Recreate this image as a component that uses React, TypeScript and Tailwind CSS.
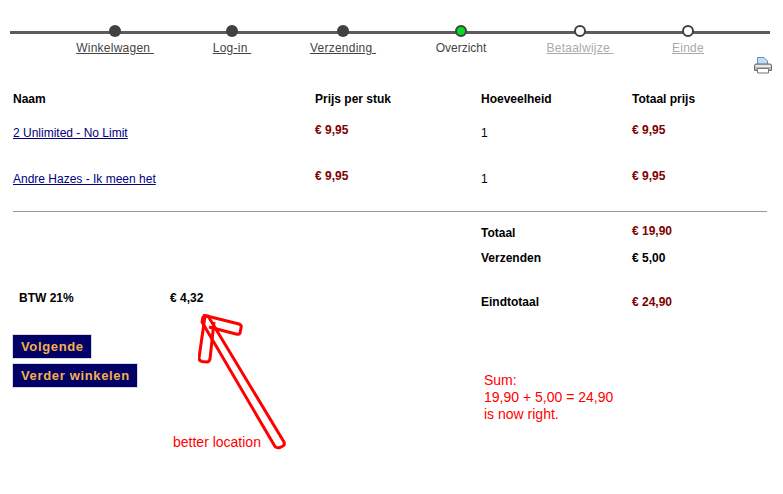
const steps = [
  { label: "Winkelwagen\u00a0", width: "w-[118px]", dot: "dark", text: "link" },
  { label: "Log-in\u00a0", width: "w-[116px]", dot: "dark", text: "link" },
  { label: "Verzending\u00a0", width: "w-[106px]", dot: "dark", text: "link" },
  { label: "Overzicht", width: "w-[130px]", dot: "green", text: "current" },
  { label: "Betaalwijze\u00a0", width: "w-[108px]", dot: "open", text: "off" },
  { label: "Einde", width: "w-[108px]", dot: "open", text: "off" },
];

const Dot = ({ kind }: { kind: string }) => {
  if (kind === "dark") return <div className="size-3 rounded-full bg-[#414141]" />;
  if (kind === "green") return <div className="size-3 rounded-full border-2 border-[#414141] bg-[#00e020]" />;
  return <div className="size-3 rounded-full border-2 border-[#414141] bg-white" />;
};

const Printer = () => (
  <svg width="18" height="17" viewBox="0 0 18 17">
    <path d="M3.500 .5h6.500l3.500 3.500v5h-10z" fill="#c4daf5" stroke="#5f8fca" />
    <path d="M.5 8.500q0 -1.500 1.500 -1.500h14q1.500 0 1.500 1.500v5h-17z" fill="#b4b7ba" stroke="#66696d" />
    <path d="M1.500 8h15v2h-15z" fill="#e6e8ea" />
    <path d="M3.500 11.500h11v4.500h-11z" fill="#fff" stroke="#74777a" />
  </svg>
);

const Arrow = () => (
  <svg width="100" height="140" viewBox="0 0 100 140" fill="none" stroke="#ff0000" strokeWidth="3" strokeLinejoin="round">
    <path d="M5 3l5 -1L86 128q1 3 -1 4l-3 1.500q-3 1 -5 -1L4 8z" />
    <path d="M7 2l-6 42q0 3 3 3.500l5 .5q2 0 3 -3l4 -37" />
    <path d="M5 1l36 9q3 1 2 4l-1 5q-1 2 -4 1l-27 -7" />
  </svg>
);

const Money = ({ children, red = true }: { children: string; red?: boolean }) => (
  <span className={red ? "font-bold text-[#800000]" : "font-bold text-black"}>{children}</span>
);

const Btn = ({ children }: { children: string }) => (
  <button className="block h-[25px] border border-[#d8d8e0] bg-[#000066] pl-[8px] pr-[7px] text-[13px] font-bold tracking-[0.65px] text-[#f5b04c]">
    {children}
  </button>
);

const App = () => {
  return (
    <div className="relative h-[494px] w-[783px] overflow-hidden bg-white font-['Liberation_Sans',Arial,sans-serif] text-xs text-black">
      {/* stepper */}
      <div className="relative ml-[10px] w-[760px] pt-[25px]">
        <div className="absolute left-0 right-0 top-[31px] h-[3px] bg-[#5c5c5c]" />
        <div className="relative ml-[46px] flex">
          {steps.map((s) => (
            <div key={s.label} className={`${s.width} flex flex-col items-center`}>
              <Dot kind={s.dot} />
              <span
                className={
                  s.text === "link"
                    ? "mt-[4px] leading-[15px] tracking-[0.25px] text-[#444444] underline"
                    : s.text === "off"
                      ? "mt-[4px] leading-[15px] tracking-[0.25px] text-[#aaaaaa] underline"
                      : "mt-[4px] leading-[15px] text-[#444444]"
                }
              >
                {s.label}
              </span>
            </div>
          ))}
        </div>
      </div>
      <div className="flex justify-end pr-[11px] pt-[1px]">
        <Printer />
      </div>

      {/* products */}
      <div className="mx-[13px] mt-[16px] w-[754px]">
        <div className="grid h-[34px] grid-cols-[302px_166px_151px_1fr] pt-[1px] font-bold">
          <span>Naam</span>
          <span>Prijs per stuk</span>
          <span>Hoeveelheid</span>
          <span>Totaal prijs</span>
        </div>
        <div className="grid h-[46px] grid-cols-[302px_166px_151px_1fr] pt-[1px]">
          <a className="text-[#000080] underline">2 Unlimited - No Limit</a>
          <span className="-mt-[3px]"><Money>€ 9,95</Money></span>
          <span>1</span>
          <span className="-mt-[3px]"><Money>€ 9,95</Money></span>
        </div>
        <div className="grid h-[46px] grid-cols-[302px_166px_151px_1fr] pt-[1px]">
          <a className="text-[#000080] underline">Andre Hazes - Ik meen het</a>
          <span className="-mt-[3px]"><Money>€ 9,95</Money></span>
          <span>1</span>
          <span className="-mt-[3px]"><Money>€ 9,95</Money></span>
        </div>
        <div className="-mt-[5px] h-px bg-[#999999]" />
      </div>

      {/* totals */}
      <div className="mt-[11px] flex">
        <div className="ml-[19px] w-[462px] pt-[67px]">
          <div className="flex font-bold">
            <span className="w-[151px]">BTW 21%</span>
            <span>€ 4,32</span>
          </div>
          <div className="-ml-[7px] mt-[28px] flex flex-col items-start gap-[4px]">
            <Btn>Volgende</Btn>
            <Btn>Verder winkelen</Btn>
          </div>
        </div>
        <div className="w-[300px]">
          <div className="flex h-[27px] font-bold">
            <span className="w-[151px] pt-[2px]">Totaal</span>
            <Money>€ 19,90</Money>
          </div>
          <div className="flex h-[44px] font-bold">
            <span className="w-[151px]">Verzenden</span>
            <Money red={false}>€ 5,00</Money>
          </div>
          <div className="flex font-bold">
            <span className="w-[151px]">Eindtotaal</span>
            <Money>€ 24,90</Money>
          </div>
          <div className="ml-[3px] mt-[62px] text-sm leading-[17px] text-[#ff0000]">
            Sum:<br />19,90 + 5,00 = 24,90<br />is now right.
          </div>
        </div>
      </div>

      {/* annotation drawn on top of the page */}
      <div className="absolute left-[198px] top-[314px]">
        <Arrow />
      </div>
      <span className="absolute left-[173px] top-[434px] text-sm leading-[17px] text-[#ff0000]">better location</span>
    </div>
  );
};

export default App;
